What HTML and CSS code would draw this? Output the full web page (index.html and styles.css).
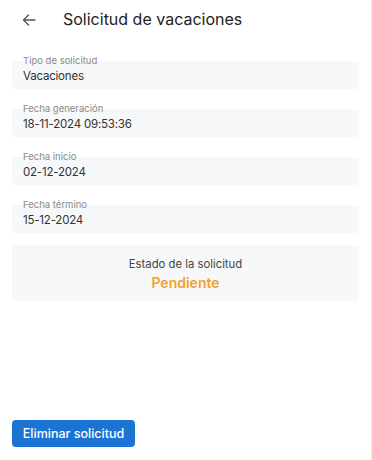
FILE: index.html
```html
<!DOCTYPE html>
<html lang="es">
<head>
<meta charset="utf-8">
<title>Solicitud de vacaciones</title>
<link rel="stylesheet" href="styles.css">
</head>
<body>
<div class="page">
  <header class="header">
    <button class="back" aria-label="Volver">
      <svg width="14" height="12" viewBox="0 0 14 12" fill="none" stroke="#555" stroke-width="1.4" stroke-linecap="round" stroke-linejoin="round"><path d="M13 6H1.5M6.5 1L1.5 6l5 5"/></svg>
    </button>
    <h1 class="title">Solicitud de vacaciones</h1>
  </header>
  <main class="content">
    <div class="field">
      <div class="label">Tipo de solicitud</div>
      <div class="value">Vacaciones</div>
    </div>
    <div class="field">
      <div class="label">Fecha generación</div>
      <div class="value">18-11-2024 09:53:36</div>
    </div>
    <div class="field">
      <div class="label">Fecha inicio</div>
      <div class="value">02-12-2024</div>
    </div>
    <div class="field">
      <div class="label">Fecha término</div>
      <div class="value">15-12-2024</div>
    </div>
    <div class="status">
      <div class="status-label">Estado de la solicitud</div>
      <div class="status-value">Pendiente</div>
    </div>
  </main>
  <footer class="footer">
    <button class="btn-delete">Eliminar solicitud</button>
  </footer>
</div>
</body>
</html>
```
FILE: styles.css
```css
* { box-sizing: border-box; }
html, body { margin: 0; padding: 0; background: #fff; }
body { font-family: Inter, "Open Sans", "Liberation Sans", sans-serif; color: #333; }
.page {
  width: 372px;
  height: 460px;
  display: flex;
  flex-direction: column;
  border-right: 1px solid #eee;
}
.header {
  height: 39px;
  display: flex;
  align-items: center;
  padding-left: 22px;
}
.back {
  border: 0;
  background: none;
  padding: 0;
  width: 14px;
  height: 12px;
  display: flex;
  margin-right: 27px;
}
.title {
  margin: 0;
  font-size: 16px;
  font-weight: 400;
  color: #222;
  line-height: 39px;
}
.content {
  padding: 22px 12px 0 12px;
  display: flex;
  flex-direction: column;
  gap: 20px;
}
.field {
  background: #f7f8f9;
  padding: 0 11px 5px;
  border-radius: 2px;
}
.label {
  margin-top: -6px;
  font-size: 9.5px;
  line-height: 12px;
  color: #8a8a8a;
}
.value {
  margin-top: 1px;
  font-size: 11.5px;
  letter-spacing: -0.2px;
  line-height: 16px;
  color: #333;
}
.status {
  margin-top: -8px;
  background: #f7f8f9;
  border-radius: 3px;
  padding: 10px 0 8px;
  text-align: center;
}
.status-label {
  font-size: 11.3px;
  line-height: 18px;
  color: #444;
}
.status-value {
  font-size: 14px;
  line-height: 20px;
  font-weight: 600;
  color: #f2a12c;
}
.footer {
  margin-top: auto;
  padding: 0 12px 13px;
}
.btn-delete {
  border: 0;
  border-radius: 4px;
  background: #1b74d3;
  color: #fff;
  font-family: inherit;
  font-size: 12.5px;
  font-weight: 500;
  height: 27px;
  width: 123px;
  padding: 0;
}
```
